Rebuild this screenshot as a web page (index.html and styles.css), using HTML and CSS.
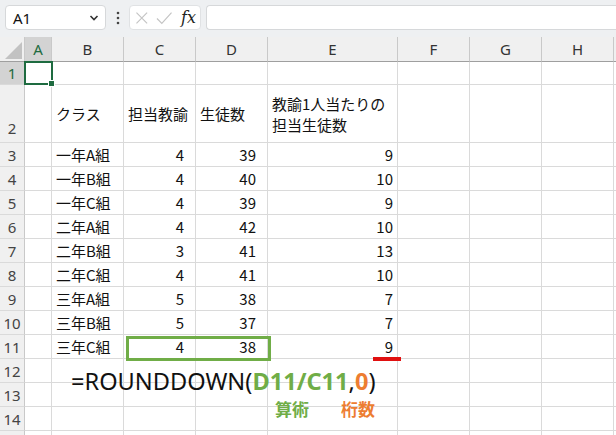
FILE: index.html
```html
<!DOCTYPE html>
<html lang="ja">
<head>
<meta charset="utf-8">
<link rel="stylesheet" href="styles.css">
</head>
<body>
<div class="toolbar">
  <div class="namebox">
    <span class="ref">A1</span>
    <svg class="chev" width="10" height="6" viewBox="0 0 10 6"><path d="M1.5 1 L5 4.5 L8.5 1" fill="none" stroke="#333" stroke-width="1.6"/></svg>
  </div>
  <svg class="dots" width="4" height="14" viewBox="0 0 4 14"><circle cx="2" cy="2" r="1.3" fill="#444"/><circle cx="2" cy="7" r="1.3" fill="#444"/><circle cx="2" cy="12" r="1.3" fill="#444"/></svg>
  <div class="fxbox">
    <svg width="14" height="14" viewBox="0 0 14 14"><path d="M1.5 1.5 L12.5 12.5 M12.5 1.5 L1.5 12.5" stroke="#c4c4c4" stroke-width="1.2" fill="none"/></svg>
    <svg width="17" height="14" viewBox="0 0 17 14"><path d="M1 7.5 L6 12.5 L16 1.5" stroke="#c4c4c4" stroke-width="1.2" fill="none"/></svg>
    <span class="fx">fx</span>
  </div>
  <div class="formula"></div>
</div>

<div class="sheet">
  <div class="row hdr">
    <div class="c corner"><span class="tri"></span></div>
    <div class="c ch sel">A</div>
    <div class="c ch">B</div>
    <div class="c ch">C</div>
    <div class="c ch">D</div>
    <div class="c ch">E</div>
    <div class="c ch">F</div>
    <div class="c ch">G</div>
    <div class="c ch">H</div>
    <div class="c ch end"></div>
  </div>
  <div class="row r1">
    <div class="c rh sel">1</div>
    <div class="c"></div><div class="c"></div><div class="c"></div><div class="c"></div><div class="c"></div><div class="c"></div><div class="c"></div><div class="c"></div><div class="c end"></div>
  </div>
  <div class="row r2">
    <div class="c rh bottom">2</div>
    <div class="c"></div>
    <div class="c t">クラス</div>
    <div class="c t">担当教諭</div>
    <div class="c t">生徒数</div>
    <div class="c t wrap">教諭1人当たりの<br>担当生徒数</div>
    <div class="c"></div><div class="c"></div><div class="c"></div><div class="c end"></div>
  </div>
  <div class="row">
    <div class="c rh">3</div><div class="c"></div>
    <div class="c t">一年A組</div><div class="c n">4</div><div class="c n">39</div><div class="c e">9</div>
    <div class="c"></div><div class="c"></div><div class="c"></div><div class="c end"></div>
  </div>
  <div class="row">
    <div class="c rh">4</div><div class="c"></div>
    <div class="c t">一年B組</div><div class="c n">4</div><div class="c n">40</div><div class="c e">10</div>
    <div class="c"></div><div class="c"></div><div class="c"></div><div class="c end"></div>
  </div>
  <div class="row">
    <div class="c rh">5</div><div class="c"></div>
    <div class="c t">一年C組</div><div class="c n">4</div><div class="c n">39</div><div class="c e">9</div>
    <div class="c"></div><div class="c"></div><div class="c"></div><div class="c end"></div>
  </div>
  <div class="row">
    <div class="c rh">6</div><div class="c"></div>
    <div class="c t">二年A組</div><div class="c n">4</div><div class="c n">42</div><div class="c e">10</div>
    <div class="c"></div><div class="c"></div><div class="c"></div><div class="c end"></div>
  </div>
  <div class="row">
    <div class="c rh">7</div><div class="c"></div>
    <div class="c t">二年B組</div><div class="c n">3</div><div class="c n">41</div><div class="c e">13</div>
    <div class="c"></div><div class="c"></div><div class="c"></div><div class="c end"></div>
  </div>
  <div class="row">
    <div class="c rh">8</div><div class="c"></div>
    <div class="c t">二年C組</div><div class="c n">4</div><div class="c n">41</div><div class="c e">10</div>
    <div class="c"></div><div class="c"></div><div class="c"></div><div class="c end"></div>
  </div>
  <div class="row">
    <div class="c rh">9</div><div class="c"></div>
    <div class="c t">三年A組</div><div class="c n">5</div><div class="c n">38</div><div class="c e">7</div>
    <div class="c"></div><div class="c"></div><div class="c"></div><div class="c end"></div>
  </div>
  <div class="row">
    <div class="c rh">10</div><div class="c"></div>
    <div class="c t">三年B組</div><div class="c n">5</div><div class="c n">37</div><div class="c e">7</div>
    <div class="c"></div><div class="c"></div><div class="c"></div><div class="c end"></div>
  </div>
  <div class="row">
    <div class="c rh">11</div><div class="c"></div>
    <div class="c t">三年C組</div><div class="c n">4</div><div class="c n">38</div><div class="c e">9</div>
    <div class="c"></div><div class="c"></div><div class="c"></div><div class="c end"></div>
  </div>
  <div class="row">
    <div class="c rh">12</div><div class="c"></div><div class="c"></div><div class="c"></div><div class="c"></div><div class="c"></div><div class="c"></div><div class="c"></div><div class="c"></div><div class="c end"></div>
  </div>
  <div class="row">
    <div class="c rh">13</div><div class="c"></div><div class="c"></div><div class="c"></div><div class="c"></div><div class="c"></div><div class="c"></div><div class="c"></div><div class="c"></div><div class="c end"></div>
  </div>
  <div class="row">
    <div class="c rh">14</div><div class="c"></div><div class="c"></div><div class="c"></div><div class="c"></div><div class="c"></div><div class="c"></div><div class="c"></div><div class="c"></div><div class="c end"></div>
  </div>
  <div class="row">
    <div class="c rh"></div><div class="c"></div><div class="c"></div><div class="c"></div><div class="c"></div><div class="c"></div><div class="c"></div><div class="c"></div><div class="c"></div><div class="c end"></div>
  </div>

  <div class="active"><span class="handle"></span></div>
  <div class="hl-box"></div>
  <div class="hl-red"></div>
  <div class="formula-note">=ROUNDDOWN(<b class="g">D11/C11</b>,<b class="o">0</b>)</div>
  <div class="label lg">算術</div>
  <div class="label lo">桁数</div>
</div>
</body>
</html>
```

FILE: styles.css
```css
html, body {
  margin: 0;
  padding: 0;
  background: #ffffff;
  overflow: hidden;
}
body {
  width: 616px;
  height: 435px;
  font-family: "Noto Sans CJK JP", "Noto Sans", sans-serif;
  color: #111;
}

/* toolbar */
.toolbar {
  height: 37px;
  box-sizing: border-box;
  padding: 5px 0 7px 5px;
  background: #eef0f2;
  display: flex;
  align-items: stretch;
}
.namebox {
  width: 101px;
  box-sizing: border-box;
  background: #fff;
  border: 1px solid #d6d8da;
  border-radius: 4px;
  display: flex;
  align-items: center;
  justify-content: space-between;
  padding: 0 6px 0 7px;
}
.ref {
  font-family: "Noto Sans", "Liberation Sans", sans-serif;
  font-size: 15px;
  color: #111;
}
.dots {
  align-self: center;
  margin: 0 9px 0 10px;
}
.fxbox {
  width: 72px;
  box-sizing: border-box;
  background: #fff;
  border: 1px solid #e0e2e4;
  border-radius: 4px;
  display: flex;
  align-items: center;
  padding: 0 4px 0 5px;
  gap: 7px;
}
.fx {
  font-family: "DejaVu Serif", "Liberation Serif", serif;
  font-style: italic;
  font-size: 16px;
  color: #222;
  margin-left: 2px;
}
.formula {
  flex: 1;
  margin-left: 5px;
  background: #fff;
  border: 1px solid #d6d8da;
  border-right: none;
  border-radius: 4px 0 0 4px;
}

/* sheet */
.sheet {
  position: relative;
}
.row {
  display: grid;
  grid-template-columns: 25px 27px 72px 72px 72px 130px 72px 72px 72px 1fr;
  height: 24px;
}
.row.hdr { height: 25px; }
.row.r1 { height: 23px; }
.row.r2 { height: 58px; }

.c {
  box-sizing: border-box;
  border-right: 1px solid #dadada;
  border-bottom: 1px solid #dadada;
  font-size: 15px;
  display: flex;
  align-items: center;
  white-space: nowrap;
  overflow: hidden;
}
.c.end { border-right: none; }

.ch {
  background: #f0f0f0;
  border-right: 1px solid #c9c9c9;
  border-bottom: 1px solid #9f9f9f;
  justify-content: center;
  font-family: "Noto Sans", "Liberation Sans", sans-serif;
  font-size: 15px;
  color: #333;
}
.ch.sel {
  background: #d3d3d3;
  color: #1e6b40;
}
.corner {
  position: relative;
  background: #f0f0f0;
  border-right: 1px solid #c9c9c9;
  border-bottom: 1px solid #9f9f9f;
}
.tri {
  position: absolute;
  right: 2px;
  bottom: 2px;
  width: 0;
  height: 0;
  border-left: 17px solid transparent;
  border-bottom: 17px solid #c2c2c2;
}
.rh {
  background: #f0f0f0;
  border-right: 1px solid #c9c9c9;
  justify-content: center;
  font-family: "Noto Sans", "Liberation Sans", sans-serif;
  font-size: 15px;
  color: #444;
}
.rh.sel {
  background: #d3d3d3;
  color: #1e6b40;
}
.rh.bottom {
  align-items: flex-end;
  padding-bottom: 4px;
}
.t {
  padding-left: 4px;
  color: #111;
}
.wrap {
  white-space: normal;
  line-height: 21px;
  padding-top: 1px;
}
.n {
  justify-content: flex-end;
  padding-right: 11px;
  color: #111;
}
.e {
  justify-content: flex-end;
  padding-right: 4px;
  color: #111;
}

/* overlays */
.active {
  position: absolute;
  left: 24px;
  top: 24px;
  width: 29px;
  height: 24px;
  box-sizing: border-box;
  border: 2px solid #1e6b40;
}
.handle {
  position: absolute;
  right: -4px;
  bottom: -4px;
  width: 5px;
  height: 5px;
  background: #1e6b40;
  border: 1px solid #fff;
}
.hl-box {
  position: absolute;
  left: 126px;
  top: 299px;
  width: 145px;
  height: 25px;
  box-sizing: border-box;
  border: 3px solid #70ad47;
}
.hl-red {
  position: absolute;
  left: 373px;
  top: 320px;
  width: 28px;
  height: 4px;
  background: #e01010;
}
.formula-note {
  position: absolute;
  left: 71px;
  top: 329px;
  font-family: "Noto Sans", "Liberation Sans", sans-serif;
  font-size: 23.6px;
  line-height: 30px;
  color: #111;
  white-space: nowrap;
}
.formula-note b { font-weight: 700; }
.g { color: #70ad47; }
.o { color: #ed7d31; }
.label {
  position: absolute;
  top: 361px;
  font-size: 17px;
  line-height: 22px;
  font-weight: 700;
  font-family: "Noto Sans CJK JP", sans-serif;
}
.lg { left: 275px; color: #70ad47; }
.lo { left: 341px; color: #ed7d31; }
```
